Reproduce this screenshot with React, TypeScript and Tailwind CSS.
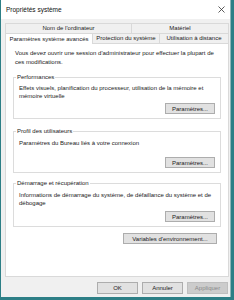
import type { ReactNode } from 'react'

function Button({ children, className = '', disabled = false }: { children: ReactNode; className?: string; disabled?: boolean }) {
  return (
    <div
      className={
        'h-[11px] flex items-center justify-center border leading-none ' +
        (disabled ? 'bg-[#cccccc] border-[#bfbfbf] text-[#8a8a8a] ' : 'bg-[#e1e1e1] border-[#adadad] text-[#1a1a1a] ') +
        className
      }
    >
      {children}
    </div>
  )
}

function Group({ title, children, className = '' }: { title: string; children: ReactNode; className?: string }) {
  return (
    <fieldset className={'mx-[7px] border border-[#dcdcdc] px-[5px] pb-[4px] ' + className}>
      <legend className="ml-[-3px] px-[1px] leading-[8px] text-[#1a1a1a]">{title}</legend>
      {children}
    </fieldset>
  )
}

export default function App() {
  return (
    <div className="w-[234px] h-[300px] bg-[#2d7f86] font-['Liberation_Sans',Arial,sans-serif] text-[6px] text-[#1a1a1a] overflow-hidden">
      <div className="ml-[1px] w-[230px] h-[297px] bg-[#f0f0f0] border-r border-[#8fb5b8] flex flex-col">
        {/* title bar */}
        <div className="h-[19px] bg-white flex items-center justify-between pl-[5px] pr-[5px]">
          <span className="text-[6.5px] text-[#111]">Propriétés système</span>
          <svg width="7" height="7" viewBox="0 0 7 7">
            <path d="M0.5 0.5L6.5 6.5M6.5 0.5L0.5 6.5" stroke="#333" strokeWidth="0.8" />
          </svg>
        </div>

        {/* tabs */}
        <div className="mt-[4px] ml-[4px] w-[224px]">
          <div className="flex h-[10px]">
            <div className="w-[127px] border border-b-0 border-[#d9d9d9] flex items-center justify-center">Nom de l'ordinateur</div>
            <div className="flex-1 border border-b-0 border-l-0 border-[#d9d9d9] flex items-center justify-center">Matériel</div>
          </div>
          <div className="flex items-end h-[10px]">
            <div className="relative z-10 w-[88px] h-[11px] mb-[-1px] bg-white border border-b-0 border-[#d9d9d9] flex items-center justify-center">
              Paramètres système avancés
            </div>
            <div className="w-[67px] h-[10px] border-t border-r border-[#d9d9d9] flex items-center justify-center">Protection du système</div>
            <div className="flex-1 h-[10px] border-t border-r border-[#d9d9d9] flex items-center justify-center">Utilisation à distance</div>
          </div>

          {/* panel */}
          <div className="h-[234px] bg-white border border-[#d9d9d9] flex flex-col">
            <p className="pt-[5px] pl-[9px] pr-[6px] leading-[9px]">
              Vous devez ouvrir une session d'administrateur pour effectuer la plupart de ces modifications.
            </p>

            <Group title="Performances" className="mt-[6px]">
              <p className="pt-[3px] leading-[8px]">Effets visuels, planification du processeur, utilisation de la mémoire et mémoire virtuelle</p>
              <div className="flex justify-end mt-[3px]">
                <Button className="w-[50px]">Paramètres...</Button>
              </div>
            </Group>

            <Group title="Profil des utilisateurs" className="mt-[8px]">
              <p className="pt-[4px] leading-[8px]">Paramètres du Bureau liés à votre connexion</p>
              <div className="flex justify-end mt-[10px]">
                <Button className="w-[50px]">Paramètres...</Button>
              </div>
            </Group>

            <Group title="Démarrage et récupération" className="mt-[6px]">
              <p className="pt-[4px] leading-[8px]">Informations de démarrage du système, de défaillance du système et de débogage</p>
              <div className="flex justify-end mt-[4px]">
                <Button className="w-[50px]">Paramètres...</Button>
              </div>
            </Group>

            <div className="flex justify-end mt-[6px] mr-[11px]">
              <Button className="w-[94px]">Variables d'environnement...</Button>
            </div>
          </div>
        </div>

        {/* bottom buttons */}
        <div className="mt-[5px] flex justify-end gap-[4px] pr-[2px]">
          <Button className="w-[41px] h-[12px]">OK</Button>
          <Button className="w-[41px] h-[12px]">Annuler</Button>
          <Button className="w-[41px] h-[12px]" disabled>Appliquer</Button>
        </div>
      </div>
    </div>
  )
}
